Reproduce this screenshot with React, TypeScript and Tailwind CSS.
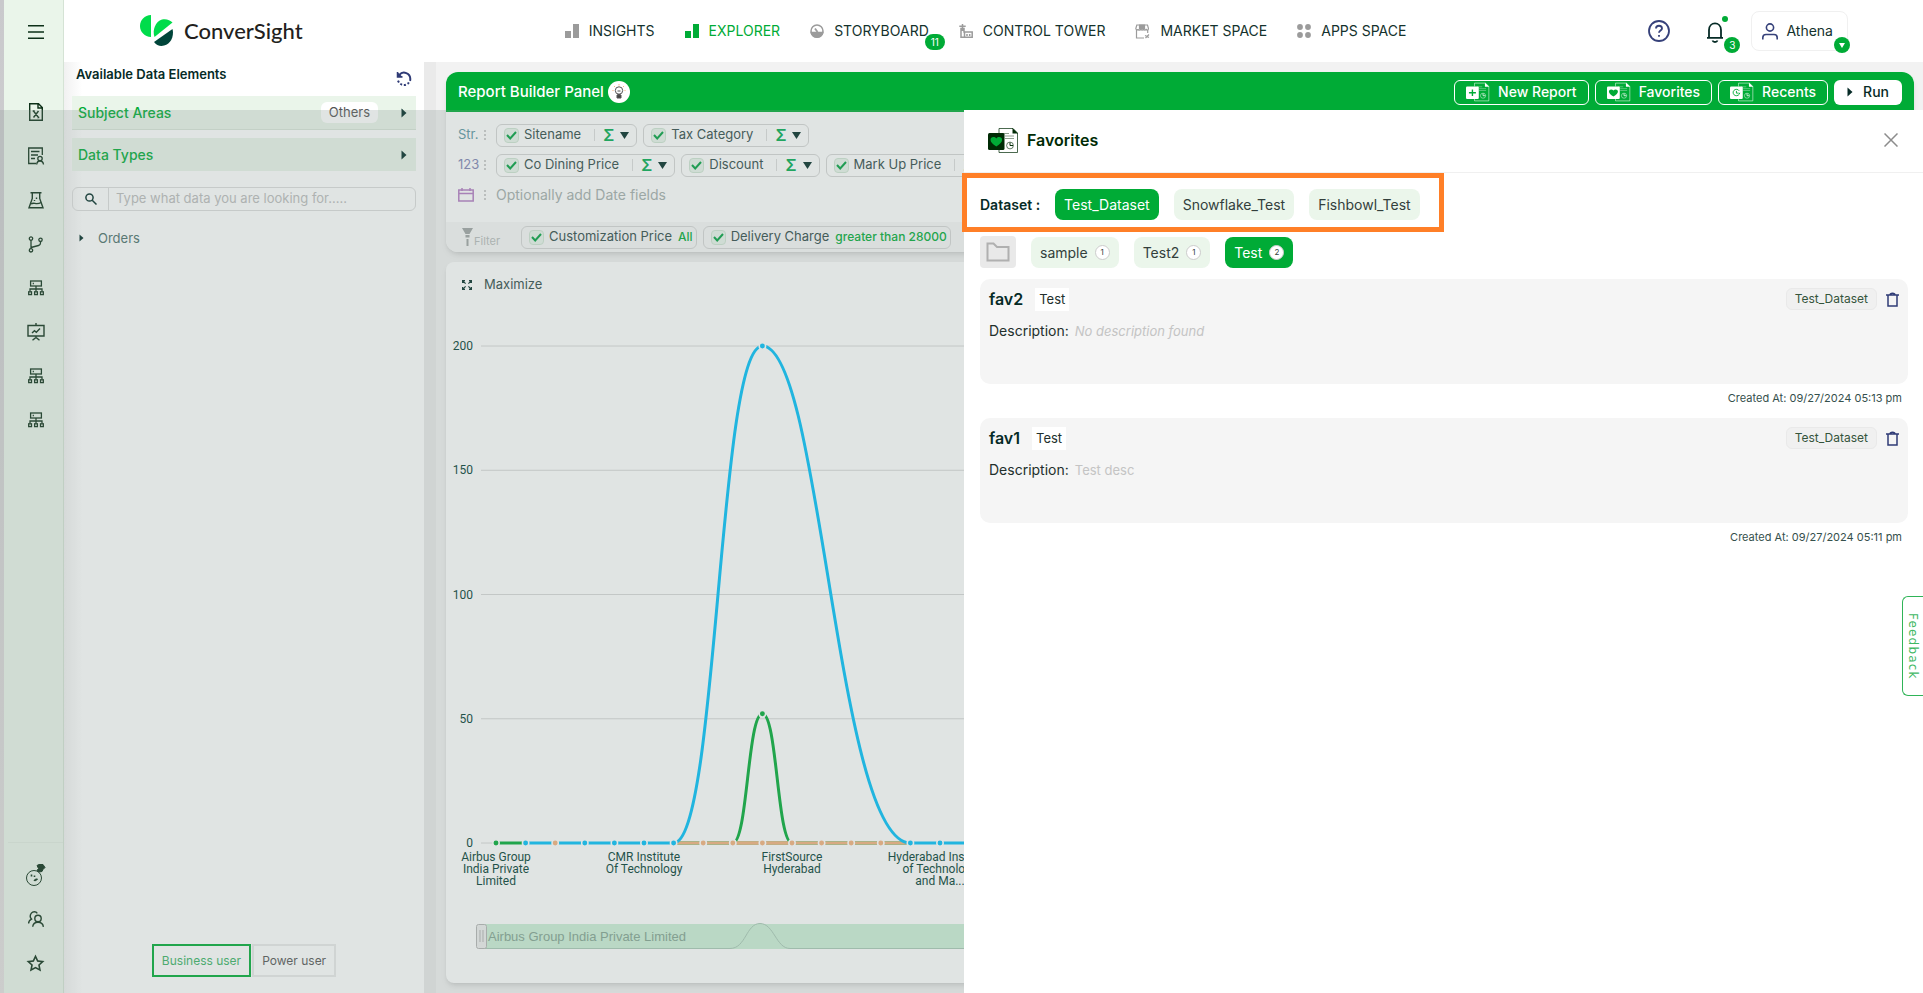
import { type ReactNode } from 'react';
import { RiStarLine } from 'react-icons/ri';
import clsx from 'clsx';

interface IconProps {
  className?: string;
}

const Caret = ({ className = '' }: IconProps) => (
  <svg width="6" height="10" viewBox="0 0 6 10" className={className} fill="currentColor">
    <path d="M0.5 0.5 5.5 5 0.5 9.5z" />
  </svg>
);

const MenuIcon = () => (
  <svg width="16" height="14" viewBox="0 0 16 14" fill="none" stroke="currentColor" strokeWidth="1.4">
    <path d="M0 .7h16M0 7h16M0 13.3h16" />
  </svg>
);

const FileIcon = () => (
  <svg width="14" height="18" viewBox="0 0 14 18" fill="none" stroke="currentColor" strokeWidth="1.4">
    <path d="M.7.7h8.800l3.800 3.800v12.800H.7zM9 .7v4.300h4.300" />
    <path d="m4.500 8 5 6.500M9.500 8l-5 6.500M3.700 8h2M8.300 14.500h2" />
  </svg>
);

const CertificateIcon = () => (
  <svg width="18" height="18" viewBox="0 0 18 18" fill="none" stroke="currentColor" strokeWidth="1.3">
    <path d="M9 16.5H1.7V1h13.6v7M4 4.500h8.500M4 8h7M4 11.500h4" />
    <circle cx="13" cy="11.500" r="2.200" />
    <path d="M9.700 17.500c.2-2.600 1.500-3.500 3.300-3.500s3.200.9 3.500 3.500" />
  </svg>
);

const FlaskIcon = () => (
  <svg width="16" height="17" viewBox="0 0 16 17" fill="none" stroke="currentColor" strokeWidth="1.400">
    <path d="M2.500.8h11M4.300 1v5.500L1 15.800h14L11.700 6.500V1" />
    <path d="M3 12c3-2.500 5 1.500 10-1.500" />
    <path d="M8.500 5.500v1.500M6.500 8v1" />
  </svg>
);

const BranchIcon = () => (
  <svg width="16" height="17" viewBox="0 0 16 17" fill="none" stroke="currentColor" strokeWidth="1.300">
    <circle cx="3" cy="2.600" r="1.700" />
    <circle cx="3" cy="14.300" r="1.700" />
    <circle cx="12.500" cy="3.800" r="1.700" />
    <path d="M3 4.300v8.300M3 11.500 10.500 9.500c1.400-.4 2-1.200 2-2.500V5.500" />
  </svg>
);

const NetworkIcon = () => (
  <svg width="16" height="16" viewBox="0 0 16 16" fill="none" stroke="currentColor" strokeWidth="1.300">
    <rect x="2.600" y="1" width="10.800" height="5" />
    <path d="M4.700 3.500h1.200M8 6v5.500M2 11.500V9h12v2.500" />
    <rect x=".7" y="11.800" width="2.800" height="2.800" />
    <rect x="6.600" y="11.800" width="2.800" height="2.800" />
    <rect x="12.500" y="11.800" width="2.800" height="2.800" />
  </svg>
);

const BoardIcon = () => (
  <svg width="18" height="18" viewBox="0 0 18 18" fill="none" stroke="currentColor" strokeWidth="1.400">
    <path d="M9 0v2.500M1 2.500h16v10.500H1zM9 13v1.500M5.500 17.300 9 14.500l3.500 2.800" />
    <path d="m5 10 2.500-2.300 1.800 1.500L13 5.500" />
  </svg>
);

const BotIcon = () => (
  <svg width="20" height="22" viewBox="0 0 20 22" fill="none" stroke="currentColor">
    <circle cx="8" cy="14" r="7.500" />
    <path d="M11 1.500 13 .5h4l2 3-2 2-1 2-3 .5-2-1.500 1.500-2z" fill="currentColor" />
    <path d="M5.500 10.500v2M8.500 11.500v1.500" strokeWidth="1.600" />
    <path d="M8 16.500c1.500.500 2.500 0 3.500-1.500l-2 0z" fill="currentColor" />
  </svg>
);

const PeopleIcon = () => (
  <svg width="16" height="16" viewBox="0 0 16 16" fill="none" stroke="currentColor" strokeWidth="1.400">
    <circle cx="10" cy="7.500" r="3.200" />
    <path d="M4.700 15.800c.3-3 2.200-4.600 5.300-4.600s5 1.600 5.400 4.600" />
    <path d="M.6 12.500c0-2 1-3.500 2.900-4.400C1.500 6 2.200 3.800 3.400 2.200 4.800.3 8 .3 9.300 2.300" />
  </svg>
);

const ResetIcon = () => (
  <svg width="16" height="16" viewBox="0 0 16 16" fill="none" stroke="#2f3b76" strokeWidth="2">
    <path d="M3.300 3.800A6.300 6.300 0 0 1 14.300 8c0 .8-.1 1.300-.3 1.900" />
    <path d="M1.500 1v5h5" strokeWidth="1.500" fill="#2f3b76" />
    <path d="M13 11.500A6.300 6.300 0 0 1 1.700 8" strokeDasharray="2 1.800" />
  </svg>
);

const SearchIcon = () => (
  <svg width="12" height="12" viewBox="0 0 12 12" fill="none" stroke="#002b26" strokeWidth="1.500">
    <circle cx="4.500" cy="4.500" r="3.600" />
    <path d="m7.200 7.200 4.300 4.300" />
  </svg>
);

const BarsIcon = () => (
  <svg width="14" height="14" viewBox="0 0 14 14" fill="currentColor">
    <rect x="0" y="7" width="6" height="7" />
    <rect x="8" y="0" width="6" height="14" />
  </svg>
);

const GaugeIcon = () => (
  <svg width="14" height="14" viewBox="0 0 14 14" fill="none" stroke="currentColor" strokeWidth="1.500">
    <circle cx="7" cy="7" r="6" />
    <path d="M1.200 8.500h11.600c-.8 3-3 4.700-5.800 4.700S2 11.500 1.200 8.500z" fill="currentColor" />
    <path d="M5 4.500 7.500 8" strokeWidth="1.800" />
  </svg>
);

const TowerIcon = () => (
  <svg width="14" height="14" viewBox="0 0 14 14" fill="none" stroke="currentColor" strokeWidth="1.500">
    <path d="M3.500 0v7M.3 2.300h6.400M2 4.500h3V8h8.200v5.300H2zM5.500 8v5M8 10v2M10.700 10v2" />
  </svg>
);

const MarketIcon = () => (
  <svg width="15" height="15" viewBox="0 0 15 15" fill="none" stroke="currentColor" strokeWidth="1.200">
    <path d="M1.800 1h10.700l1 3.500c0 2-2.300 2-2.300.3 0 1.700-2.700 1.700-2.700 0 0 1.700-2.700 1.700-2.700 0 0 1.700-2.700 1.700-2.700.3 0 1-2.300 1-2.300-.6z" />
    <path d="M4.500 1h5v4h-5z" fill="currentColor" />
    <path d="M1.500 6v8H9M12.700 6v3M10 11.500l4 2M14 10.500l-3.500 3.500" />
  </svg>
);

const AppsIcon = () => (
  <svg width="14" height="14" viewBox="0 0 14 14" fill="currentColor">
    <circle cx="3" cy="3" r="2.900" />
    <circle cx="11" cy="3" r="2.900" />
    <circle cx="3" cy="11" r="2.900" />
    <circle cx="11" cy="11" r="2.900" />
  </svg>
);

interface ReportIconProps {
  kind: 'plus' | 'heart' | 'clock';
  dark?: boolean;
}

// Page outline with a square badge in front, shared by the toolbar and the drawer title
const ReportIcon = ({ kind, dark = false }: ReportIconProps) => {
  const ink = dark ? '#002b05' : '#ffffff';
  const cut = '#00ab36';
  return (
    <svg width={dark ? 31 : 24} height={dark ? 27 : 20} viewBox="0 0 31 27" preserveAspectRatio="none">
      <path d="M11 6V1.500h14l4.500 4.500v19.500H11V23" fill="none" stroke={ink} strokeOpacity=".7" />
      <path d="M24.500 1v5.500H30z" fill={ink} />
      <path d="M17 9h9M17 11.500h9M14 6.500h7" stroke={ink} strokeOpacity=".45" />
      <circle cx="22" cy="18.500" r="3.400" fill="none" stroke={ink} strokeOpacity=".6" />
      <path d="M22 18.500V15.500M22 18.500h3" stroke={ink} />
      <rect x="0" y="6" width="16.500" height="17" rx="1.500" fill={ink} />
      {kind === 'plus' && <path d="M8.300 10v9M3.800 14.500h9" stroke={cut} strokeWidth="1.800" />}
      {kind === 'heart' && <path d="M8.300 19.500C4.500 17 2.500 15 2.500 12.700c0-3 4-3.700 5.800-1.200 1.800-2.500 5.800-1.800 5.800 1.200 0 2.300-2 4.300-5.800 6.800z" fill={cut} />}
      {kind === 'clock' && <path d="M12 12a4.300 4.300 0 1 0 .6 2.500M8.300 12v3h3" fill="none" stroke={cut} strokeWidth="1.200" />}
    </svg>
  );
};

const navItems: { label: string; icon: ReactNode; active?: boolean; badge?: string }[] = [
  { label: 'INSIGHTS', icon: <BarsIcon /> },
  { label: 'EXPLORER', icon: <BarsIcon />, active: true },
  { label: 'STORYBOARD', icon: <GaugeIcon />, badge: '11' },
  { label: 'CONTROL TOWER', icon: <TowerIcon /> },
  { label: 'MARKET SPACE', icon: <MarketIcon /> },
  { label: 'APPS SPACE', icon: <AppsIcon /> },
];

const sideItems: { label: string; icon: ReactNode }[] = [
  { label: 'Files', icon: <FileIcon /> },
  { label: 'Certificates', icon: <CertificateIcon /> },
  { label: 'Experiments', icon: <FlaskIcon /> },
  { label: 'Flows', icon: <BranchIcon /> },
  { label: 'Network', icon: <NetworkIcon /> },
  { label: 'Board', icon: <BoardIcon /> },
  { label: 'Servers', icon: <NetworkIcon /> },
  { label: 'Clusters', icon: <NetworkIcon /> },
];

const sideFooter: { label: string; icon: ReactNode }[] = [
  { label: 'Athena', icon: <BotIcon /> },
  { label: 'Users', icon: <PeopleIcon /> },
  { label: 'Starred', icon: <RiStarLine size={19} /> },
];

const Sidebar = () => (
  <aside className="ml-1 flex w-[60px] shrink-0 flex-col items-center border-r border-[#d5e3d5] bg-[#eaf5ea] pl-1 text-[#0d3018]">
    <button aria-label="Menu" className="grid h-16 w-full place-items-center">
      <MenuIcon />
    </button>
    <nav className="mt-[26px] flex flex-col">
      {sideItems.map(item => (
        <a key={item.label} href="#" aria-label={item.label} className="grid h-11 w-11 place-items-center">
          {item.icon}
        </a>
      ))}
    </nav>
    <nav className="mt-auto flex w-full flex-col items-center border-t border-[#e0ebe0] pt-[10px] pb-2">
      {sideFooter.map(item => (
        <a key={item.label} href="#" aria-label={item.label} className="grid h-11 w-11 place-items-center">
          {item.icon}
        </a>
      ))}
    </nav>
  </aside>
);

const Header = () => (
  <header className="flex h-[62px] shrink-0 items-center justify-between bg-white pr-[75px] pl-[76px]">
    <a href="#" className="flex items-center gap-[10px]">
      <svg width="34" height="32" viewBox="0 0 34 32">
        <path d="M11 0v22C4.500 21.500 0 17 0 11S4.500.500 11 0z" fill="#00dc4b" />
        <path d="M14.500 22C12 15 15.500 6.500 22 4.500c4-1 8 .3 10.500 3z" fill="#00dc4b" />
        <path d="M32.500 14c2 8-2.500 17-11 17-3 0-5.500-1.500-7.500-4z" fill="#00453a" />
      </svg>
      <span className="font-['Lato',sans-serif] text-[22px] leading-8 font-medium text-[#231f20]">ConverSight</span>
    </a>
    <nav className="flex items-center gap-[30px] pl-5 text-sm">
      {navItems.map(item => (
        <a
          key={item.label}
          href="#"
          className={clsx('relative flex items-center gap-[10px]', item.active ? 'text-[#00ab36]' : 'text-[#9b9b9b]')}
        >
          {item.icon}
          <span className={clsx(!item.active && 'text-[#14322d]')}>{item.label}</span>
          {item.badge && (
            <span className="absolute top-[13px] -right-4 h-4 w-5 rounded-full bg-[#00ab36] text-center text-[10px] leading-4 text-white">
              {item.badge}
            </span>
          )}
        </a>
      ))}
    </nav>
    <div className="flex items-center">
      <button aria-label="Help">
        <svg width="22" height="22" viewBox="0 0 22 22" fill="none" stroke="#36417a" strokeWidth="1.800">
          <circle cx="11" cy="11" r="10" />
          <path d="M8 8.500c0-3.700 6-3.700 6 0 0 2-3 2.200-3 4.300M11 15v1.800" />
        </svg>
      </button>
      <button aria-label="Notifications" className="relative ml-9 pt-[2px]">
        <svg width="18" height="21" viewBox="0 0 18 21" fill="none" stroke="#062b26" strokeWidth="1.800">
          <path d="M1 15.800h16M3 15.500V8c0-8.800 12-8.800 12 0v7.500M6.500 18.500c.7 2 4.300 2 5 0" />
        </svg>
        <span className="absolute -top-1 -right-1 h-[6px] w-[6px] rounded-full bg-[#00ab36]" />
        <span className="absolute top-[17px] -right-4 h-4 w-4 rounded-full bg-[#00ab36] text-center text-[10px] leading-4 text-white">3</span>
      </button>
      <button className="relative ml-[27px] flex h-10 items-center gap-2 rounded-lg border border-[#f0f0f0] pr-[14px] pl-[10px] text-sm text-[#14322d]">
        <svg width="16" height="17" viewBox="0 0 16 17" fill="none" stroke="#36417a" strokeWidth="1.600">
          <circle cx="8" cy="4.500" r="3.600" />
          <path d="M.8 16.500v-1.800c0-2 1.300-3.200 3.200-3.200h8c2 0 3.200 1.200 3.200 3.200v1.800" />
        </svg>
        Athena
        <span className="absolute -right-[3px] -bottom-[3px] grid h-4 w-4 place-items-center rounded-full bg-[#00ab36]">
          <svg width="6" height="5" viewBox="0 0 6 5" fill="#fff"><path d="M0 0h6L3 5z" /></svg>
        </span>
      </button>
    </div>
  </header>
);

const DataPanel = () => (
  <section className="flex w-[360px] shrink-0 flex-col bg-linear-to-r from-[#f1f1f1] via-white via-5% to-white px-2">
    <div className="flex h-[34px] items-center justify-between pr-1 pb-2 pl-1">
      <h2 className="text-[13px] font-semibold text-[#062b26]">Available Data Elements</h2>
      <button aria-label="Reset" className="mt-2">
        <ResetIcon />
      </button>
    </div>
    <button className="flex h-[34px] items-center border-b border-[#d8e4d8] bg-[#eaf5ea] px-[6px] text-sm font-medium text-[#00ab36]">
      Subject Areas
      <span className="mr-[23px] ml-auto h-[21px] rounded-md bg-white px-2 text-[13px] leading-[21px] font-normal text-[#555555]">Others</span>
      <Caret className="mr-[3px] text-[#002b26]" />
    </button>
    <button className="mt-2 flex h-[33px] items-center justify-between bg-[#eaf5ea] px-[6px] text-sm font-medium text-[#00ab36]">
      Data Types
      <Caret className="mr-[3px] text-[#002b26]" />
    </button>
    <label className="mt-4 flex h-6 items-stretch overflow-hidden rounded-md border border-[#dcdcdc]">
      <span className="grid w-9 place-items-center border-r border-[#dcdcdc]">
        <SearchIcon />
      </span>
      <input
        type="search"
        aria-label="Search data"
        placeholder="Type what data you are looking for....."
        className="min-w-0 flex-1 bg-transparent px-[7px] text-[13px] outline-none placeholder:text-[#bcbcbc]"
      />
    </label>
    <button className="mt-[17px] flex items-center gap-[14px] pl-[7px] text-[13px] leading-5 text-[#4b6f6b]">
      <Caret className="h-2 w-[5px] text-[#002b26]" />
      Orders
    </button>
    <div className="mt-auto flex justify-center gap-px pt-4 pb-4 text-xs">
      <button className="h-[33px] border-2 border-[#00ab36] px-2 text-[#3ab265]">Business user</button>
      <button className="h-[33px] border-2 border-[#eaeaea] px-2 text-[#555555]">Power user</button>
    </div>
  </section>
);

interface FieldChipProps {
  label: string;
  filter?: string;
}

const FieldChip = ({ label, filter }: FieldChipProps) => (
  <div className="flex h-[23px] shrink-0 items-center rounded-md border border-[#d6d6d6] px-[7px] text-[13px] text-[#2f4a48]">
    <label className="flex items-center gap-[5px] whitespace-nowrap">
      <span className="grid h-[15px] w-[15px] place-items-center">
        <input
          type="checkbox"
          defaultChecked
          className="col-start-1 row-start-1 h-[15px] w-[15px] appearance-none rounded border border-[#cfe5d3] bg-[#e9f5eb]"
        />
        <svg width="11" height="9" viewBox="0 0 11 9" className="pointer-events-none col-start-1 row-start-1" fill="none" stroke="#00a040" strokeWidth="2">
          <path d="m1 4 3.200 3.500L10 1" />
        </svg>
      </span>
      {label}
    </label>
    {filter ? (
      <span className="-mr-1 ml-[6px] text-xs font-medium whitespace-nowrap text-[#00ab36]">{filter}</span>
    ) : (
      <button aria-label={`Aggregate ${label}`} className="ml-[13px] flex h-3 items-center gap-[6px] border-l border-[#dcdcdc] pl-2">
        <span className="text-base leading-3 font-semibold text-[#00ab50]">Σ</span>
        <svg width="9" height="7" viewBox="0 0 9 7" fill="#002b26"><path d="M0 0h9L4.500 7z" /></svg>
      </button>
    )}
  </div>
);

const FieldRow = ({ tag, children }: { tag: ReactNode; children: ReactNode }) => (
  <div className="flex h-[30px] items-center">
    <span className="flex w-[26px] shrink-0 items-center text-[13px] text-[#5b96a3]">{tag}</span>
    <span className="mr-[10px] flex flex-col gap-[2px]">
      <i className="h-[2px] w-[2px] bg-[#cccccc]" />
      <i className="h-[2px] w-[2px] bg-[#cccccc]" />
      <i className="h-[2px] w-[2px] bg-[#cccccc]" />
    </span>
    <div className="flex min-w-0 gap-[6px] text-[#a5aeac]">{children}</div>
  </div>
);

const outlineButton = 'flex h-[25px] items-center gap-2 rounded-md border border-white px-[11px]';

const BuilderPanel = () => (
  <section className="rounded-xl bg-white shadow-md">
    <div className="flex h-10 items-center rounded-t-xl bg-[#00ab36] px-3 text-sm font-medium text-white">
      <h2 className="text-[15px]">Report Builder Panel</h2>
      <span className="ml-1 grid h-[22px] w-[22px] place-items-center rounded-full bg-white">
        <svg width="14" height="16" viewBox="0 0 14 16" fill="none" stroke="#555555">
          <circle cx="7" cy="6.500" r="3.700" />
          <path d="M5.500 7h3M5.500 10.500h3" />
          <path d="M5 11h4v3H5z" fill="#444444" />
          <path d="M7 0v1.500M2 2l1 1M12 2l-1 1M.5 6.500h1M12.500 6.500h1" stroke="#f4a261" strokeWidth=".8" />
        </svg>
      </span>
      <div className="ml-auto flex gap-[6px]">
        <button className={outlineButton}><ReportIcon kind="plus" />New Report</button>
        <button className={outlineButton}><ReportIcon kind="heart" />Favorites</button>
        <button className={outlineButton}><ReportIcon kind="clock" />Recents</button>
        <button className="flex h-[25px] items-center gap-[10px] rounded-md bg-white px-[13px] text-[#062b26]"><Caret />Run</button>
      </div>
    </div>
    <div className="px-3 pt-2 pb-3">
      <FieldRow tag="Str.">
        <FieldChip label="Sitename" />
        <FieldChip label="Tax Category" />
      </FieldRow>
      <FieldRow tag={<span className="text-[#7f85b5]">123</span>}>
        <FieldChip label="Co Dining Price" />
        <FieldChip label="Discount" />
        <FieldChip label="Mark Up Price" />
      </FieldRow>
      <FieldRow
        tag={
          <svg width="16" height="14" viewBox="0 0 16 14" fill="none" stroke="#b47cc4" strokeWidth="1.500">
            <path d="M.8 2h14.400v11H.8zM.8 5.500h14.400M4 0v3M12 0v3" />
          </svg>
        }
      >
        <span className="text-sm">Optionally add Date fields</span>
      </FieldRow>
    </div>
    <div className="flex h-[30px] items-center gap-[6px] rounded-b-xl bg-[#f7f7f7] pl-4">
      <span className="flex w-[53px] items-center text-[11px] text-[#b9bdbc]">
        <svg width="11" height="18" viewBox="0 0 11 18" fill="#a0a5a4">
          <path d="M0 0h11L7.500 6h-4zM3.500 7h4v2.500h-4zM4.500 11h2v7h-2z" />
        </svg>
        <span className="mt-2 ml-px">Filter</span>
      </span>
      <FieldChip label="Customization Price" filter="All" />
      <FieldChip label="Delivery Charge" filter="greater than 28000" />
    </div>
  </section>
);

const STEP = 29.6;
const BASE = 533;
const px = (index: number) => 50 + index * STEP;
const py = (value: number) => BASE - value * 2.485;

// Rises and falls with horizontal tangents; long falls leave the peak a little earlier
const bell = (start: number, peak: number, end: number, value: number, fall = 0.5) => {
  const rise = (px(start) + px(peak)) / 2;
  const width = px(end) - px(peak);
  const leave = px(peak) + width * fall;
  const land = px(peak) + width * 0.5;
  return `M${px(start)} ${BASE}C${rise} ${BASE} ${rise} ${py(value)} ${px(peak)} ${py(value)}C${leave} ${py(value)} ${land} ${BASE} ${px(end)} ${BASE}`;
};

const categories = [
  { index: 0, lines: ['Airbus Group', 'India Private', 'Limited'] },
  { index: 5, lines: ['CMR Institute', 'Of Technology'] },
  { index: 10, lines: ['FirstSource', 'Hyderabad'] },
  { index: 15, lines: ['Hyderabad Institute', 'of Technology', 'and Ma...'] },
];

const pointColor = (index: number) => {
  if (index === 0) return '#00ab36';
  if (index === 2 || (index > 6 && index < 14)) return '#f5b27e';
  return '#00c0fa';
};

const ReportChart = () => (
  <svg className="h-[673px] w-full" fontFamily="Roboto, sans-serif" fontSize="12" fill="#003c32">
    {[0, 50, 100, 150, 200].map(value => (
      <g key={value}>
        <line x1="35" x2="100%" y1={py(value)} y2={py(value)} stroke="#d8d8d8" />
        <text x="27" y={py(value) + 4} textAnchor="end">{value}</text>
      </g>
    ))}
    <g fill="none" strokeWidth="3">
      <path d={`M${px(6)} ${BASE}H${px(14)}`} stroke="#b9bd85" strokeWidth="4" />
      <path d={`M${px(6)} ${BASE}H${px(14)}`} stroke="#f5b27e" strokeWidth="2" />
      <path d={`M${px(0)} ${BASE}H${px(1)}`} stroke="#00ab36" />
      <path d={`M${px(1)} ${BASE}H${px(6)}M${px(14)} ${BASE}H${px(46)}`} stroke="#00c0fa" />
      <path d={bell(8, 9, 10, 52)} stroke="#00ab36" />
      <path d={bell(6, 9, 14, 200, 0.4)} stroke="#00c0fa" />
      <path d={`M${px(8)} ${BASE}H${px(10)}`} stroke="#f5b27e" />
    </g>
    <g stroke="#ffffff" strokeWidth="1.500">
      {Array.from({ length: 30 }, (_, index) => (
        <circle key={index} cx={px(index)} cy={BASE} r="3.200" fill={pointColor(index)} />
      ))}
      <circle cx={px(9)} cy={py(200)} r="3.200" fill="#00c0fa" />
      <circle cx={px(9)} cy={py(52)} r="3.200" fill="#00ab36" />
    </g>
    {categories.map(category => (
      <text key={category.index} textAnchor="middle" y={BASE + 6}>
        {category.lines.map(line => (
          <tspan key={line} x={px(category.index)} dy="12">{line}</tspan>
        ))}
      </text>
    ))}
    <rect x="35" y="614" width="95%" height="25" fill="#ccefd7" />
    <path d="M35 638.500H284C300 638.500 300 613.500 314 613.500S330 638.500 344 638.500H1400" fill="none" stroke="#a9c8b6" />
    <rect x="30.500" y="614.500" width="10" height="24" rx="2" fill="#eeeeee" stroke="#b5b5b5" />
    <path d="M34 620v12M37 620v12" stroke="#b5b5b5" />
    <text x="42" y="631" fontFamily="Liberation Sans, sans-serif" fontSize="13" fill="#83a391">Airbus Group India Private Limited</text>
  </svg>
);

const ChartPanel = () => (
  <section className="mt-[10px] flex-1 rounded-lg bg-white shadow-md">
    <button className="flex h-12 items-center gap-3 px-4 pb-[2px] text-[13px] text-[#2f4a48]">
      <svg width="10" height="10" viewBox="0 0 10 10" fill="none" stroke="#002b26" strokeWidth="1.200">
        <path d="M0 .6h3M.6 0v3M.6.600l3 3M7 .6h3M9.400 0v3M9.400.600l-3 3M0 9.400h3M.6 10V7M.6 9.400l3-3M7 9.400h3M9.400 10V7M9.400 9.400l-3-3" />
      </svg>
      Maximize
    </button>
    <ReportChart />
  </section>
);

const chipClass = (active: boolean) =>
  clsx('flex h-[31px] items-center rounded-lg px-[9px] text-sm', active ? 'bg-[#00ab36] text-white' : 'bg-[#ebf6eb] text-[#333f3c]');

const datasets = ['Test_Dataset', 'Snowflake_Test', 'Fishbowl_Test'];

const folders = [
  { name: 'sample', count: 1 },
  { name: 'Test2', count: 1 },
  { name: 'Test', count: 2 },
];

const favorites = [
  { name: 'fav2', description: '', createdAt: '09/27/2024 05:13 pm' },
  { name: 'fav1', description: 'Test desc', createdAt: '09/27/2024 05:11 pm' },
];

const FavoritesDrawer = () => (
  <section className="absolute top-[110px] right-0 bottom-0 w-[959px] bg-white">
    <div className="flex h-[63px] items-center border-b border-[#f0f0f0] pr-[25px] pb-[2px] pl-6">
      <ReportIcon kind="heart" dark />
      <h2 className="ml-2 text-base font-semibold text-[#002b05]">Favorites</h2>
      <button aria-label="Close" className="ml-auto">
        <svg width="14" height="14" viewBox="0 0 14 14" fill="none" stroke="#8c8c8c" strokeWidth="1.500">
          <path d="m.5.500 13 13M13.500.500l-13 13" />
        </svg>
      </button>
    </div>
    <div className="-ml-[2px] flex h-[59px] w-[482px] items-center gap-[15px] border-[5px] border-[#ff7f27] px-[13px] pt-1">
      <h3 className="text-sm font-semibold whitespace-nowrap text-[#062b26]">Dataset :</h3>
      {datasets.map((name, index) => (
        <button key={name} className={chipClass(index === 0)}>{name}</button>
      ))}
    </div>
    <div className="mt-1 flex items-end gap-[15px] pl-4">
      <button aria-label="Folders" className="grid h-8 w-9 place-items-center rounded bg-[#e9e9e9]">
        <svg width="24" height="20" viewBox="0 0 24 20" fill="none" stroke="#b0b0b0" strokeWidth="2">
          <path d="M1.500 1.500h6L11 5h11.500v13.500h-21z" />
        </svg>
      </button>
      {folders.map(folder => (
        <button key={folder.name} className={chipClass(folder.name === 'Test')}>
          {folder.name}
          <span className="ml-[7px] h-[15px] w-[15px] rounded-full border border-[#cccccc] bg-white text-[8px] leading-[13px] text-[#333f3c]">
            {folder.count}
          </span>
        </button>
      ))}
    </div>
    <ul className="mt-[11px] mr-[15px] ml-4">
      {favorites.map(favorite => (
        <li key={favorite.name}>
          <div className="h-[105px] rounded-[10px] bg-[#f5f5f5] px-[9px] pt-2">
            <div className="flex items-center">
              <h3 className="text-base leading-6 font-semibold text-[#062b26]">{favorite.name}</h3>
              <span className="ml-3 h-[23px] bg-white px-1 text-[13px] leading-[23px] text-[#222f2c]">Test</span>
              <span className="ml-auto h-[22px] rounded-md border border-[#e9e9e9] bg-[#f0f0f0] px-2 text-xs leading-5 text-[#35543c]">
                Test_Dataset
              </span>
              <button aria-label={`Delete ${favorite.name}`} className="ml-[9px]">
                <svg width="13" height="15" viewBox="0 0 13 15" fill="none" stroke="#2f3b76" strokeWidth="1.500">
                  <path d="M0 3h13M2 3v11h9V3M4 3c0-2.500 5-2.500 5 0" />
                </svg>
              </button>
            </div>
            <p className="mt-[10px] flex items-center text-sm leading-5 text-[#222f2c]">
              Description:
              <span className={clsx('ml-[6px] text-[13px] text-[#c4c4c4]', !favorite.description && 'italic')}>
                {favorite.description || 'No description found'}
              </span>
            </p>
          </div>
          <p className="h-[34px] pt-[6px] pr-[6px] text-right text-[11px] leading-4 text-[#35504c]">Created At: {favorite.createdAt}</p>
        </li>
      ))}
    </ul>
    <button className="absolute top-[486px] right-0 h-[100px] w-[21px] rounded-l-md border border-r-0 border-[#2fb457] bg-white font-['DejaVu_Sans',sans-serif] text-xs leading-4 tracking-widest text-[#3fb864] [writing-mode:vertical-rl]">
      Feedback
    </button>
  </section>
);

export default function App() {
  return (
    <div className="relative flex min-h-screen overflow-hidden bg-linear-to-b from-[#c9c9cc] to-[#e4e0e0] font-['Inter',sans-serif]">
      <Sidebar />
      <div className="flex min-w-0 flex-1 flex-col">
        <Header />
        <div className="flex flex-1">
          <DataPanel />
          <div className="w-3 shrink-0 bg-[#eaeaea]" />
          <main className="flex min-w-0 flex-1 flex-col bg-[#f2f2f2] px-[10px] py-[10px] pr-[9px]">
            <BuilderPanel />
            <ChartPanel />
          </main>
        </div>
      </div>
      <div className="absolute top-[110px] right-0 bottom-0 left-0 bg-[#849390]/25" />
      <FavoritesDrawer />
    </div>
  );
}
